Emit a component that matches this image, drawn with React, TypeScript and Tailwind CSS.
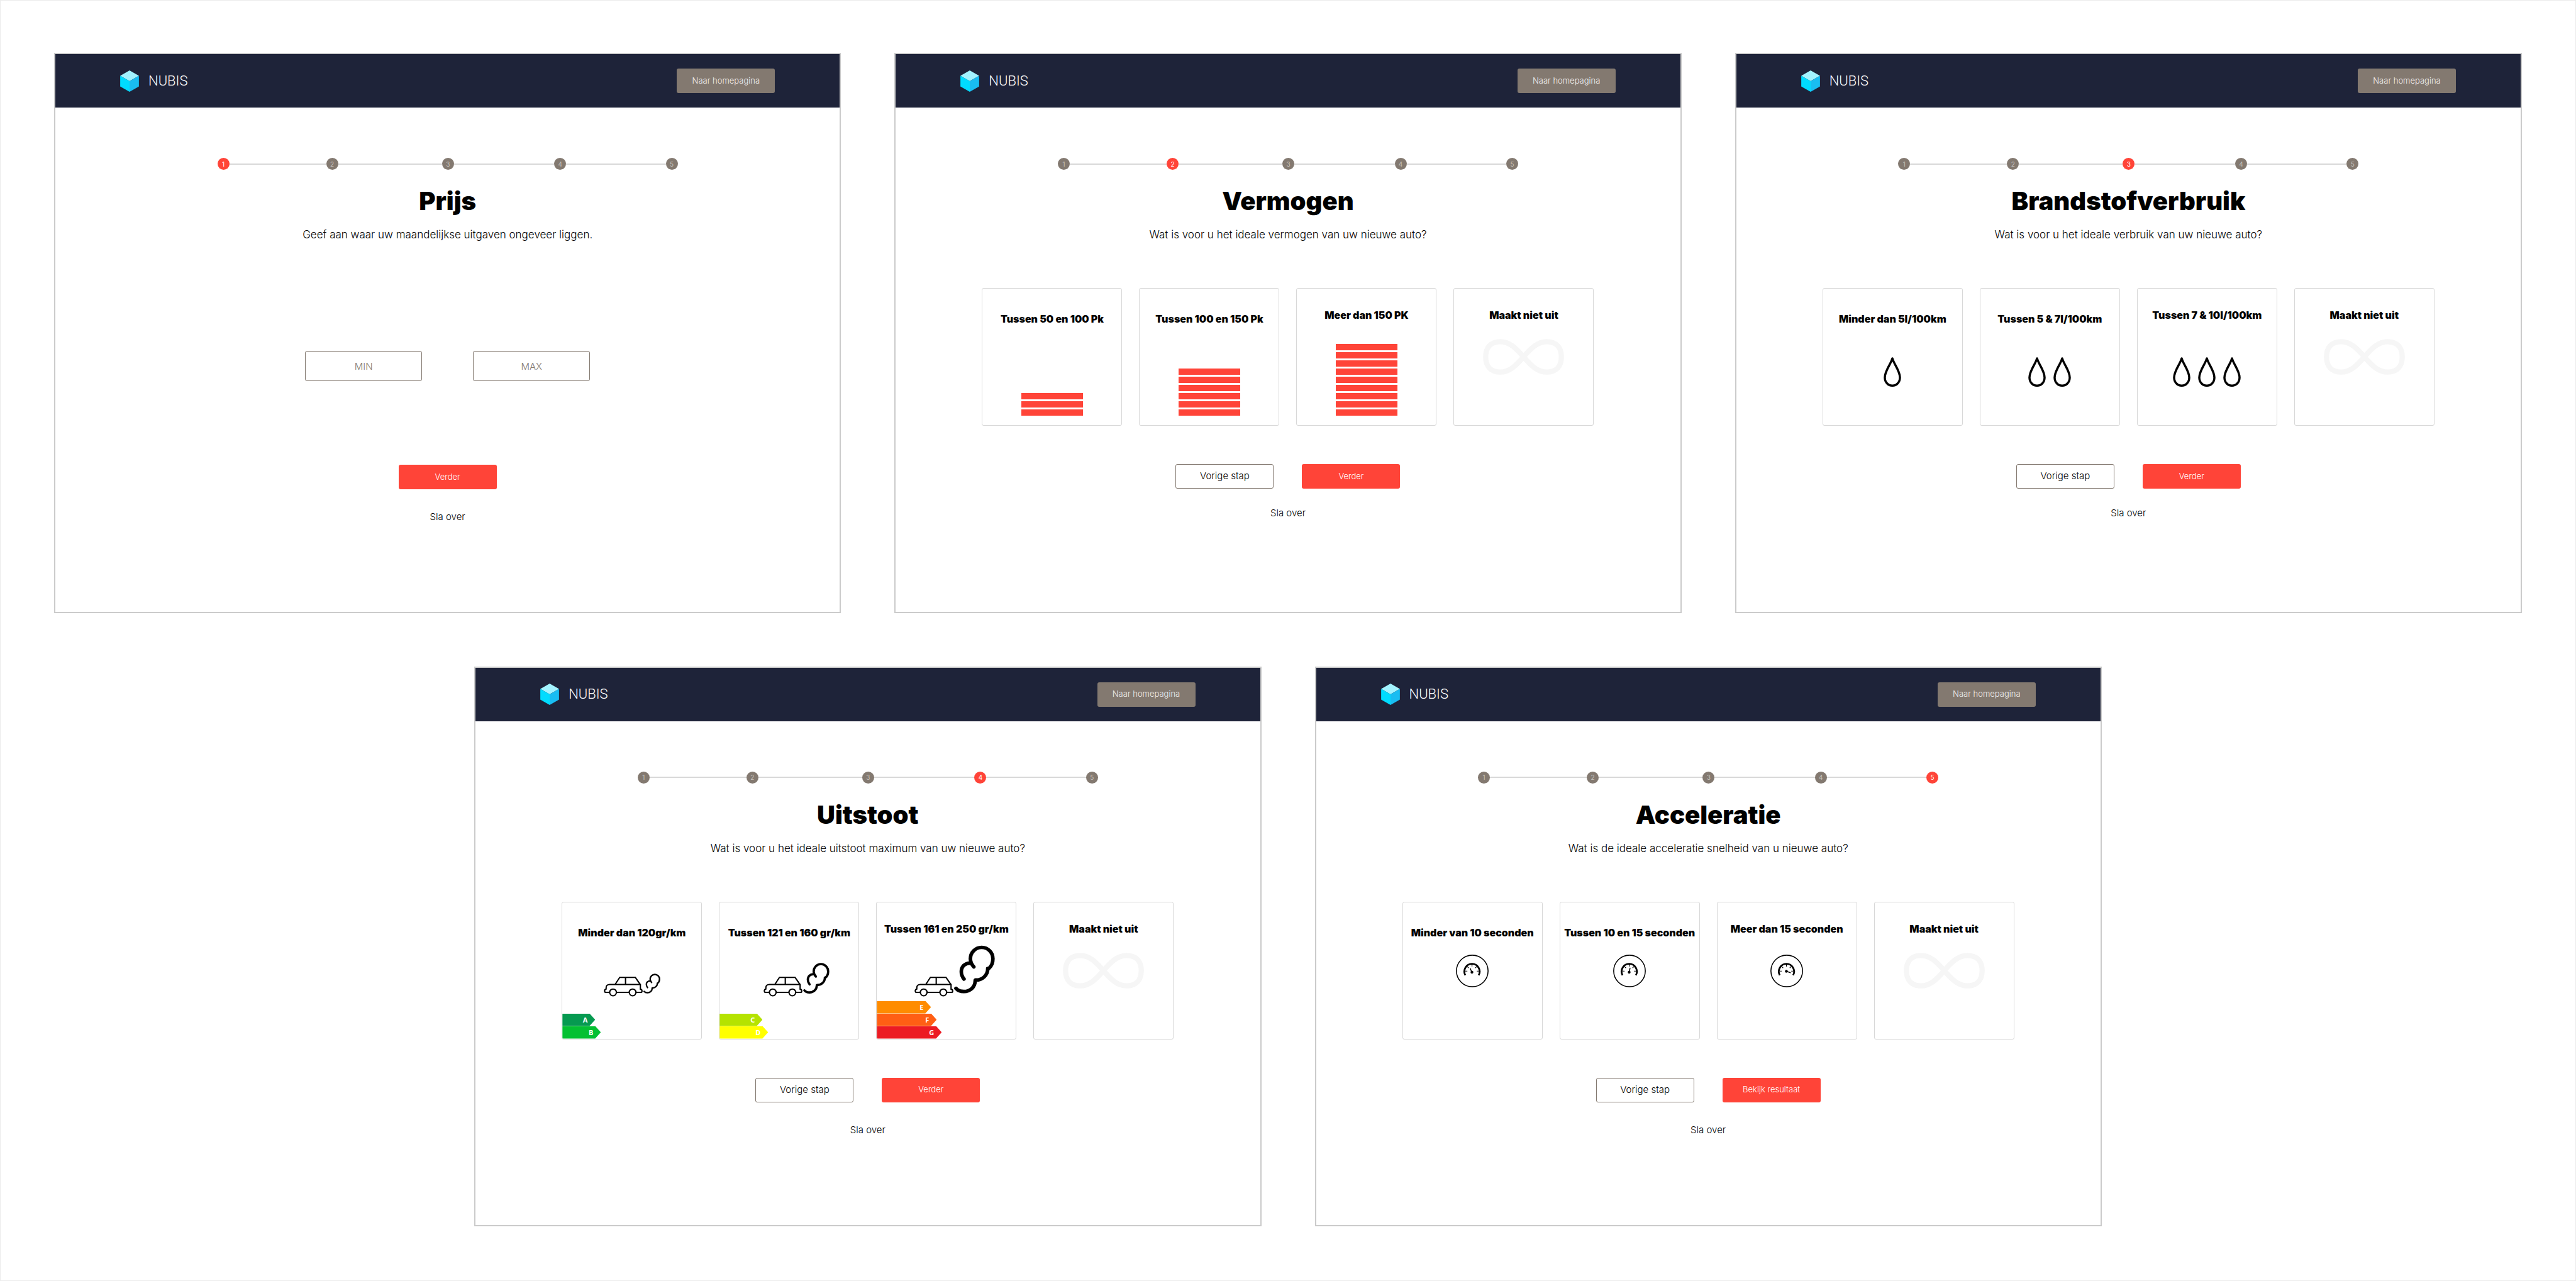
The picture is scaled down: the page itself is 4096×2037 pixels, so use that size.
import type { ReactNode } from "react";

const steps = [1, 2, 3, 4, 5];
const connectors = ["flex-[155]", "flex-[165]", "flex-[160]", "flex-[159]"];

function Logo() {
  return (
    <div className="flex items-center gap-[15px]">
      <svg viewBox="0 0 35 40" className="h-[34px] w-[30px]" aria-hidden="true">
        <path d="M17.5 0 35 10 17.5 20 0 10Z" fill="#a3f3ff" />
        <path d="M0 10 17.5 20V40L0 30Z" fill="#00dcff" />
        <path d="M35 10 17.5 20V40L35 30Z" fill="#19bdf2" />
      </svg>
      <span className="font-['Roboto',sans-serif] text-[22px] leading-none font-light text-white">NUBIS</span>
    </div>
  );
}

function Header() {
  return (
    <header className="flex h-[85px] items-center justify-between bg-[#1e2339] px-[103px]">
      <Logo />
      <button type="button" className="h-[39px] w-[156px] rounded-[3px] bg-[#837970] text-[13px] font-light text-[#f3f1f0]">
        Naar homepagina
      </button>
    </header>
  );
}

function Stepper({ active }: { active: number }) {
  return (
    <ol className="mt-[80px] flex w-[732px] items-center">
      {steps.map((n, i) => (
        <li key={n} className={n === 1 ? "flex items-center" : `flex items-center ${connectors[i - 1]}`}>
          {n > 1 && <span className="h-[2px] flex-1 bg-[#d8d8d8]" />}
          <span
            className={`flex size-[19px] items-center justify-center rounded-full text-[10px] leading-none ${
              n === active ? "bg-[#ff4438] text-white" : "bg-[#837970] text-[#c6c1bd]"
            }`}
          >
            {n}
          </span>
        </li>
      ))}
    </ol>
  );
}

type PanelProps = {
  step: number;
  title: string;
  question: string;
  next: string;
  skipClass: string;
  actionsClass: string;
  className: string;
  children: ReactNode;
};

function Panel({ step, title, question, next, skipClass, actionsClass, className, children }: PanelProps) {
  return (
    <section className={`col-span-2 flex flex-col border-2 border-[#cbcbcb] bg-white ${className}`}>
      <Header />
      <div className="flex flex-col items-center">
        <Stepper active={step} />
        <h2 className="mt-[26px] text-[40px] leading-[48px] font-black text-black">{title}</h2>
        <p className="mt-[17px] text-[17px] leading-[24px] font-light text-black">{question}</p>
        {children}
        <div className={`flex gap-[45px] ${actionsClass}`}>
          {step > 1 && (
            <button
              type="button"
              className="h-[39px] w-[156px] rounded-[3px] border border-[#837970] text-[15px] font-light text-black"
            >
              Vorige stap
            </button>
          )}
          <button type="button" className="h-[39px] w-[156px] rounded-[3px] bg-[#ff4438] text-[13px] font-light text-white">
            {next}
          </button>
        </div>
        <a href="#" className={`text-[15px] leading-[20px] font-light text-black ${skipClass}`}>
          Sla over
        </a>
      </div>
    </section>
  );
}

function Options({ children }: { children: ReactNode }) {
  return <div className="mt-[73px] flex gap-[27px]">{children}</div>;
}

function Option({ label, low, children }: { label: string; low?: boolean; children: ReactNode }) {
  return (
    <button
      type="button"
      className={`flex h-[219px] w-[223px] flex-col items-center overflow-hidden rounded-[3px] border border-[#d8d8d8] ${
        low ? "pt-[38px]" : "pt-[32px]"
      }`}
    >
      <span className="text-[16px] leading-[20px] font-black whitespace-nowrap text-black">{label}</span>
      {children}
    </button>
  );
}

function Bars({ count }: { count: number }) {
  return (
    <span className="mt-auto mb-[15px] flex flex-col gap-[3px]">
      {Array.from({ length: count }, (_, i) => (
        <span key={i} className="h-[10px] w-[98px] bg-[#ff4438]" />
      ))}
    </span>
  );
}

function NoPreference() {
  return (
    <Option label="Maakt niet uit">
      <svg
        viewBox="0 0 149 66"
        className="mt-[28px] h-[57px] w-[129px]"
        fill="none"
        stroke="#f6f6f6"
        strokeWidth="9.6"
        aria-hidden="true"
      >
        <path d="M74.5 33C60 16 48 5 32 5C14 5 4.8 16 4.8 33C4.8 50 14 61 32 61C48 61 60 50 74.5 33C89 16 101 5 117 5C135 5 144.2 16 144.2 33C144.2 50 135 61 117 61C101 61 89 50 74.5 33Z" />
      </svg>
    </Option>
  );
}

function Drops({ count, low }: { count: number; low?: boolean }) {
  return (
    <span className={`flex gap-[12px] ${low ? "mt-[51px]" : "mt-[57px]"}`}>
      {Array.from({ length: count }, (_, i) => (
        <svg key={i} viewBox="0 0 32 54" className="h-[47px] w-[28px]" fill="none" stroke="#000" strokeWidth="4" aria-hidden="true">
          <path
            strokeLinejoin="round"
            d="M16 2.2C13.5 12 2.2 25 2.2 37C2.2 45.5 8 52 16 52C24 52 29.8 45.5 29.8 37C29.8 25 18.5 12 16 2.2Z"
          />
        </svg>
      ))}
    </span>
  );
}

function Car() {
  return (
    <svg viewBox="0 0 71 37" className="h-[32px] w-[62px]" fill="none" stroke="#000" strokeWidth="2.4" aria-hidden="true">
      <path d="M10.5 29H3.5C1.8 29 1.2 27.5 1.2 26C1.2 24.3 2.4 23.2 4 22.8V20.5C4 16.5 6.5 14.5 10.5 14.5H67V23C69 23.4 70 24.8 70 26.5C70 28 69 29 67.5 29H59M23 29H46.5" />
      <path d="M20.5 14.5 29 1.4H57.7L66.8 14.5M39.7 1.4V14.5" />
      <circle cx="16.7" cy="29" r="6.2" />
      <circle cx="52.7" cy="29" r="6.2" />
    </svg>
  );
}

function Smoke({ size }: { size: string }) {
  return (
    <svg
      viewBox="0 0 75 88"
      className={`mb-[5px] ${size}`}
      fill="none"
      stroke="#000"
      strokeWidth="6.6"
      strokeLinecap="round"
      aria-hidden="true"
    >
      <path d="M36.3 39.3C32 35 30 30 30 24.5C30 13 39.3 3.6 50.7 3.6S71.3 13 71.3 24.5C71.3 32 68 38.5 64.5 41.5" />
      <path d="M61.8 42.5C62.3 54 52 64 39.5 63.5" />
      <path d="M38.8 64.5C38.8 76 30 84.6 18 84.6C12 84.6 6.5 82.5 3.5 78.8" />
      <path d="M18.3 61.7C14.5 57 13.3 53 13.3 48.3C13.3 39 20 32.5 28.7 32.5" />
    </svg>
  );
}

function Exhaust({ pad, size }: { pad: string; size: string }) {
  return (
    <span className={`mt-auto flex items-end gap-px self-start ${pad}`}>
      <Car />
      <Smoke size={size} />
    </span>
  );
}

function EnergyLabels({ items }: { items: [string, string][] }) {
  return (
    <span className="flex flex-col self-stretch">
      {items.map(([letter, look]) => (
        <span
          key={letter}
          className={`flex h-[20px] items-center justify-end pr-[12px] font-['Noto_Sans',sans-serif] text-[11px] leading-none font-bold text-white [clip-path:polygon(0_0,calc(100%-9px)_0,100%_50%,calc(100%-9px)_100%,0_100%)] ${look}`}
        >
          {letter}
        </span>
      ))}
    </span>
  );
}

function Gauge({ needle, hubY, low }: { needle: string; hubY: number; low?: boolean }) {
  return (
    <svg viewBox="0 0 60 60" className={`size-[52px] ${low ? "mt-[25px]" : "mt-[31px]"}`} fill="none" stroke="#000" aria-hidden="true">
      <circle cx="30" cy="30" r="29" strokeWidth="1.8" />
      <path d="M17.3 37.8A14 14 0 1 1 41.7 37.8" strokeWidth="3.2" />
      <path d="M17 30.3H21M38.3 30.3H42.3M29.5 17V21.8M21 22 23.5 24.5M38 22 35.5 24.5" strokeWidth="1.3" />
      <circle cx="29.4" cy={hubY} r="2.6" fill="#000" stroke="none" />
      <path d={needle} strokeWidth="1.7" strokeLinecap="round" />
    </svg>
  );
}

function PriceInput({ label }: { label: string }) {
  return (
    <input
      type="text"
      aria-label={label}
      placeholder={label}
      className="h-[48px] w-[186px] rounded-[3px] border border-[#837970] bg-white text-center text-[15px] font-light text-black placeholder:text-[#837970]"
    />
  );
}

export default function App() {
  return (
    <main className="grid min-h-screen auto-rows-fr grid-cols-6 gap-[85px] border border-[#ececec] bg-white px-[85px] pt-[83px] pb-[86px] font-['Inter','Liberation_Sans',sans-serif]">
      <Panel
        step={1}
        title="Prijs"
        question="Geef aan waar uw maandelijkse uitgaven ongeveer liggen."
        next="Verder"
        actionsClass="mt-[133px]"
        skipClass="mt-[34px]"
        className=""
      >
        <div className="mt-[173px] flex gap-[81px]">
          <PriceInput label="MIN" />
          <PriceInput label="MAX" />
        </div>
      </Panel>

      <Panel
        step={2}
        title="Vermogen"
        question="Wat is voor u het ideale vermogen van uw nieuwe auto?"
        next="Verder"
        actionsClass="mt-[61px]"
        skipClass="mt-[29px]"
        className=""
      >
        <Options>
          <Option label="Tussen 50 en 100 Pk" low>
            <Bars count={3} />
          </Option>
          <Option label="Tussen 100 en 150 Pk" low>
            <Bars count={6} />
          </Option>
          <Option label="Meer dan 150 PK">
            <Bars count={9} />
          </Option>
          <NoPreference />
        </Options>
      </Panel>

      <Panel
        step={3}
        title="Brandstofverbruik"
        question="Wat is voor u het ideale verbruik van uw nieuwe auto?"
        next="Verder"
        actionsClass="mt-[61px]"
        skipClass="mt-[29px]"
        className=""
      >
        <Options>
          <Option label="Minder dan 5l/100km" low>
            <Drops count={1} low />
          </Option>
          <Option label="Tussen 5 & 7l/100km" low>
            <Drops count={2} low />
          </Option>
          <Option label="Tussen 7 & 10l/100km">
            <Drops count={3} />
          </Option>
          <NoPreference />
        </Options>
      </Panel>

      <Panel
        step={4}
        title="Uitstoot"
        question="Wat is voor u het ideale uitstoot maximum van uw nieuwe auto?"
        next="Verder"
        actionsClass="mt-[61px]"
        skipClass="mt-[34px]"
        className="col-start-2"
      >
        <Options>
          <Option label="Minder dan 120gr/km" low>
            <Exhaust pad="pl-[66px] pb-[27px]" size="h-[32px] w-[27px]" />
            <EnergyLabels
              items={[
                ["A", "bg-[#069a50] w-[52px]"],
                ["B", "bg-[#04c032] w-[61px]"],
              ]}
            />
          </Option>
          <Option label="Tussen 121 en 160 gr/km" low>
            <Exhaust pad="pl-[70px] pb-[27px]" size="h-[49px] w-[42px]" />
            <EnergyLabels
              items={[
                ["C", "bg-[#b5e300] w-[68px]"],
                ["D", "bg-[#ffff00] w-[77px]"],
              ]}
            />
          </Option>
          <Option label="Tussen 161 en 250 gr/km">
            <Exhaust pad="pl-[60px] pb-[7px]" size="h-[77px] w-[65px]" />
            <EnergyLabels
              items={[
                ["E", "bg-[#ff8c00] w-[86px]"],
                ["F", "bg-[#ff5f14] w-[95px]"],
                ["G", "bg-[#ec1b23] w-[103px]"],
              ]}
            />
          </Option>
          <NoPreference />
        </Options>
      </Panel>

      <Panel
        step={5}
        title="Acceleratie"
        question="Wat is de ideale acceleratie snelheid van u nieuwe auto?"
        next="Bekijk resultaat"
        actionsClass="mt-[61px]"
        skipClass="mt-[34px]"
        className=""
      >
        <Options>
          <Option label="Minder van 10 seconden" low>
            <Gauge needle="M29.4 32.3 26.2 25.5" hubY={32.3} low />
          </Option>
          <Option label="Tussen 10 en 15 seconden" low>
            <Gauge needle="M29.4 32.3 31 24.8" hubY={32.3} low />
          </Option>
          <Option label="Meer dan 15 seconden">
            <Gauge needle="M29.4 30.5 36.6 33.2" hubY={30.5} />
          </Option>
          <NoPreference />
        </Options>
      </Panel>
    </main>
  );
}
